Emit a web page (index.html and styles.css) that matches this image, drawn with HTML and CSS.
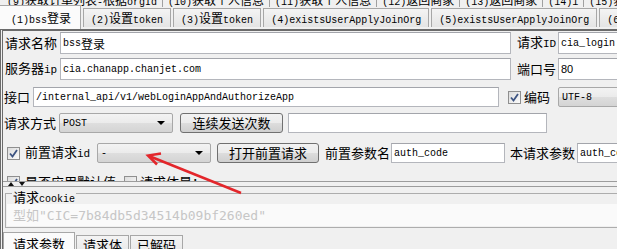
FILE: index.html
```html
<!DOCTYPE html>
<html lang="zh-CN">
<head>
  <meta charset="UTF-8" />
  <title>接口测试 - bss登录</title>
  <link rel="stylesheet" href="styles.css">
</head>
<body>

<div class="tabs-back">
  <span class="tb tb-first"><span class="en">(9)</span>获取订单列表<span class="en">-</span>根据<span class="en">orgId</span></span>
  <span class="tb"><span class="en">(10)</span>获取个人信息</span>
  <span class="tb"><span class="en">(11)</span>获取个人信息</span>
  <span class="tb"><span class="en">(12)</span>返回商家</span>
  <span class="tb"><span class="en">(13)</span>返回商家</span>
  <span class="tb"><span class="en">(14)1</span></span>
  <span class="tb"><span class="en">(15)</span>获取</span>
</div>

<div class="tabs">
  <span class="tab active"><span class="en">(1)bss</span>登录</span>
  <span class="tab"><span class="en">(2)</span>设置<span class="en">token</span></span>
  <span class="tab"><span class="en">(3)</span>设置<span class="en">token</span></span>
  <span class="tab"><span class="en">(4)existsUserApplyJoinOrg</span></span>
  <span class="tab"><span class="en">(5)existsUserApplyJoinOrg</span></span>
  <span class="tab"><span class="en">(6)</span>获取</span>
</div>

<div class="panel">
  <div class="pane-top">
    <div class="row r1">
      <span class="lbl w-name">请求名称</span>
      <div class="field w-main"><span class="en">bss</span>登录</div>
      <span class="lbl side">请求<span class="en-l">ID</span></span>
      <div class="field w-side"><span class="en">cia_login</span></div>
    </div>

    <div class="row r2">
      <span class="lbl w-name">服务器<span class="en-l">ip</span></span>
      <div class="field w-main"><span class="en">cia.chanapp.chanjet.com</span></div>
      <span class="lbl side">端口号</span>
      <div class="field w-side"><span class="num">80</span></div>
    </div>

    <div class="row r3">
      <span class="lbl w-api">接口</span>
      <div class="field w-api-field"><span class="en">/internal_api/v1/webLoginAppAndAuthorizeApp</span></div>
      <span class="check ml9"><svg width="9" height="9" viewBox="0 0 9 9"><path d="M1 4.5 L3.5 7.5 L8 1" fill="none" stroke="#3d5482" stroke-width="1.8"/></svg></span>
      <span class="lbl w-enc">编码</span>
      <div class="combo w-side"><span class="en">UTF-8</span></div>
    </div>

    <div class="row r4">
      <span class="lbl w-method">请求方式</span>
      <div class="combo w-combo"><span class="en">POST</span></div>
      <button class="btn w-repeat">连续发送次数</button>
      <div class="field w-count"></div>
    </div>

    <div class="row r5">
      <span class="check ml3"><svg width="9" height="9" viewBox="0 0 9 9"><path d="M1 4.5 L3.5 7.5 L8 1" fill="none" stroke="#3d5482" stroke-width="1.8"/></svg></span>
      <span class="lbl w-pre">前置请求<span class="en-l">id</span></span>
      <div class="combo w-combo"><span class="en">-</span></div>
      <button class="btn w-open">打开前置请求</button>
      <span class="lbl w-param">前置参数名</span>
      <div class="field w-code"><span class="en">auth_code</span></div>
      <span class="lbl w-this">本请求参数</span>
      <div class="field w-side"><span class="en">auth_code</span></div>
    </div>

    <div class="row r6">
      <span class="check ml3"><svg width="9" height="9" viewBox="0 0 9 9"><path d="M1 4.5 L3.5 7.5 L8 1" fill="none" stroke="#3d5482" stroke-width="1.8"/></svg></span>
      <span class="lbl w-default">是否应用默认值</span>
      <span class="check ml5"></span>
      <span class="lbl w-body">请求体是：</span>
    </div>
  </div>

  <div class="splitter">
    <span class="tri up"></span>
    <span class="tri down"></span>
  </div>

  <div class="pane-bottom">
    <div class="cookie-box">
      <div class="cookie-title">请求<span class="en">cookie</span></div>
      <div class="cookie-input">型如<span class="ph">"CIC=7b84db5d34514b09bf260ed"</span></div>
    </div>

    <div class="sub-tabs">
      <span class="sub-tab active">请求参数</span>
      <span class="sub-tab">请求体</span>
      <span class="sub-tab">已解码</span>
    </div>
  </div>
</div>

<svg class="arrow" width="617" height="249" viewBox="0 0 617 249">
  <line x1="241" y1="193" x2="149" y2="156" stroke="#e3262b" stroke-width="2.5"/>
  <polyline points="161,153.5 148,155.5 157,164.5" fill="none" stroke="#e3262b" stroke-width="2.5" stroke-linejoin="miter"/>
</svg>

</body>
</html>
```

FILE: styles.css
```css
* {
  box-sizing: border-box;
}
body {
  margin: 0;
  width: 617px;
  height: 249px;
  overflow: hidden;
  position: relative;
  background-color: #f0f0f0;
  font-family: "Noto Sans CJK SC", sans-serif;
  font-size: 12px;
  color: #000;
  white-space: nowrap;
}
.en {
  font-family: "Liberation Mono", monospace;
  font-size: 10px;
}
.en-l {
  font-family: "Liberation Mono", monospace;
  font-size: 11px;
}
.num {
  font-family: "Liberation Sans", sans-serif;
  font-size: 11px;
}

/* upper tab row, mostly hidden */
.tabs-back {
  height: 7px;
  overflow: hidden;
  display: flex;
}
.tb {
  flex-shrink: 0;
  margin-top: -8px;
  height: 15px;
  line-height: 15px;
  padding: 0 5px;
  border-right: 1px solid #a0a0a0;
}
.tb-first {
  margin-left: 2px;
}

/* main tab row */
.tabs {
  height: 22px;
  display: flex;
  align-items: flex-start;
}
.tab {
  flex-shrink: 0;
  margin-top: 1px;
  margin-left: 2px;
  height: 19px;
  line-height: 18px;
  padding: 0 7px;
  border: 1px solid #a7a7a7;
  border-bottom: none;
  background: linear-gradient(#f4f4f4, #e4e4e4);
}
.tab.active {
  margin-top: -2px;
  margin-left: 0;
  height: 24px;
  line-height: 23px;
  padding: 0 9px 0 11px;
  background: #fbfbfb;
  border-left: none;
  position: relative;
}

.panel {
  border-top: 2px solid #6b6b6b;
  border-left: 3px double #6b6b6b;
}
.pane-top {
  height: 150px;
  overflow: hidden;
  padding-left: 1px;
}

.row {
  display: flex;
  align-items: center;
}
.r1 { margin-top: 1px; height: 22px; }
.r2 { margin-top: 4px; height: 22px; }
.r3 { margin-top: 7px; height: 20px; }
.r4 { margin-top: 6px; height: 20px; }
.r5 { margin-top: 10px; height: 20px; }
.r6 { margin-top: 9px; height: 20px; }

.lbl {
  flex-shrink: 0;
  font-size: 13px;
  line-height: 16px;
}
.w-name { width: 56px; padding-left: 1px; }
.side { width: 41px; margin-left: 6px; }
.w-api { width: 29px; }
.w-enc { width: 34px; margin-left: 3px; }
.w-method { width: 55px; }
.w-pre { width: 72px; margin-left: 5px; }
.w-param { width: 66px; margin-left: 6px; }
.w-this { width: 67px; margin-left: 5px; }
.w-default { width: 94px; margin-left: 5px; }
.w-body { margin-left: 3px; }

.field {
  flex-shrink: 0;
  height: 100%;
  display: flex;
  align-items: center;
  padding-left: 2px;
  background: #fff;
  border: 1px solid #b4b6bc;
  border-top-color: #a3a5ab;
}
.w-main { width: 451px; }
.w-side { width: 80px; }
.w-api-field { width: 466px; }
.w-count { width: 259px; margin-left: 5px; }
.w-code { width: 114px; }

.combo {
  flex-shrink: 0;
  height: 100%;
  position: relative;
  display: flex;
  align-items: center;
  padding-left: 3px;
  border: 1px solid #a8a8a8;
  border-radius: 2px;
  background: linear-gradient(#f3f3f3 0%, #ebebeb 50%, #dedede 51%, #d4d4d4 100%);
}
.combo::after {
  content: "";
  position: absolute;
  right: 7px;
  top: 7px;
  border-left: 4px solid transparent;
  border-right: 4px solid transparent;
  border-top: 4px solid #000;
}
.w-combo { width: 114px; }

.btn {
  flex-shrink: 0;
  height: 100%;
  padding: 0;
  font-family: "Noto Sans CJK SC", sans-serif;
  font-size: 13px;
  line-height: 16px;
  color: #000;
  border: 1px solid #707070;
  border-radius: 3px;
  background: linear-gradient(#f2f2f2 0%, #ebebeb 50%, #dddddd 51%, #cfcfcf 100%);
}
.w-repeat { width: 103px; margin-left: 7px; }
.w-open { width: 102px; margin-left: 6px; }

.check {
  flex-shrink: 0;
  width: 13px;
  height: 13px;
  display: flex;
  align-items: center;
  justify-content: center;
  border: 1px solid #8f8f8f;
  background: linear-gradient(135deg, #dcdcdc, #fbfbfb);
}
.ml3 { margin-left: 3px; }
.ml5 { margin-left: 5px; }
.ml9 { margin-left: 9px; }

/* splitter between panes */
.splitter {
  height: 6px;
  border-top: 1px solid #9c9c9c;
  border-bottom: 1px solid #9c9c9c;
  display: flex;
  align-items: center;
  padding-left: 5px;
}
.tri {
  width: 0;
  height: 0;
  border-left: 3px solid transparent;
  border-right: 3px solid transparent;
  margin-right: 5px;
}
.tri.up { border-bottom: 4px solid #111; }
.tri.down { border-top: 4px solid #111; }

.pane-bottom {
  height: 62px;
}
.cookie-box {
  margin: 6px 0 0 2px;
  height: 35px;
  border: 1px solid #adadad;
  border-right: none;
}
.cookie-title {
  width: fit-content;
  margin: -4px 0 0 6px;
  padding: 0 1px;
  height: 12px;
  line-height: 13px;
  font-size: 13px;
  background: #f0f0f0;
}
.cookie-input {
  margin: 2px 0 0 1px;
  height: 22px;
  line-height: 22px;
  padding-left: 6px;
  background: #fafafa;
  color: #c6c6c6;
  font-size: 13px;
}
.ph {
  font-family: "DejaVu Sans Mono", monospace;
  font-size: 13px;
}

.sub-tabs {
  display: flex;
  align-items: flex-start;
  margin-top: 4px;
  height: 20px;
}
.sub-tab {
  margin-top: 3px;
  margin-left: 1px;
  height: 20px;
  padding: 0 6px;
  line-height: 18px;
  font-size: 13px;
  border: 1px solid #a7a7a7;
  border-bottom: none;
  background: linear-gradient(#f4f4f4, #e6e6e6);
}
.sub-tab.active {
  margin-top: 0;
  margin-left: 0;
  padding: 2px 9px 0 9px;
  background: #fbfbfb;
}

.arrow {
  position: absolute;
  left: 0;
  top: 0;
  pointer-events: none;
}
```
